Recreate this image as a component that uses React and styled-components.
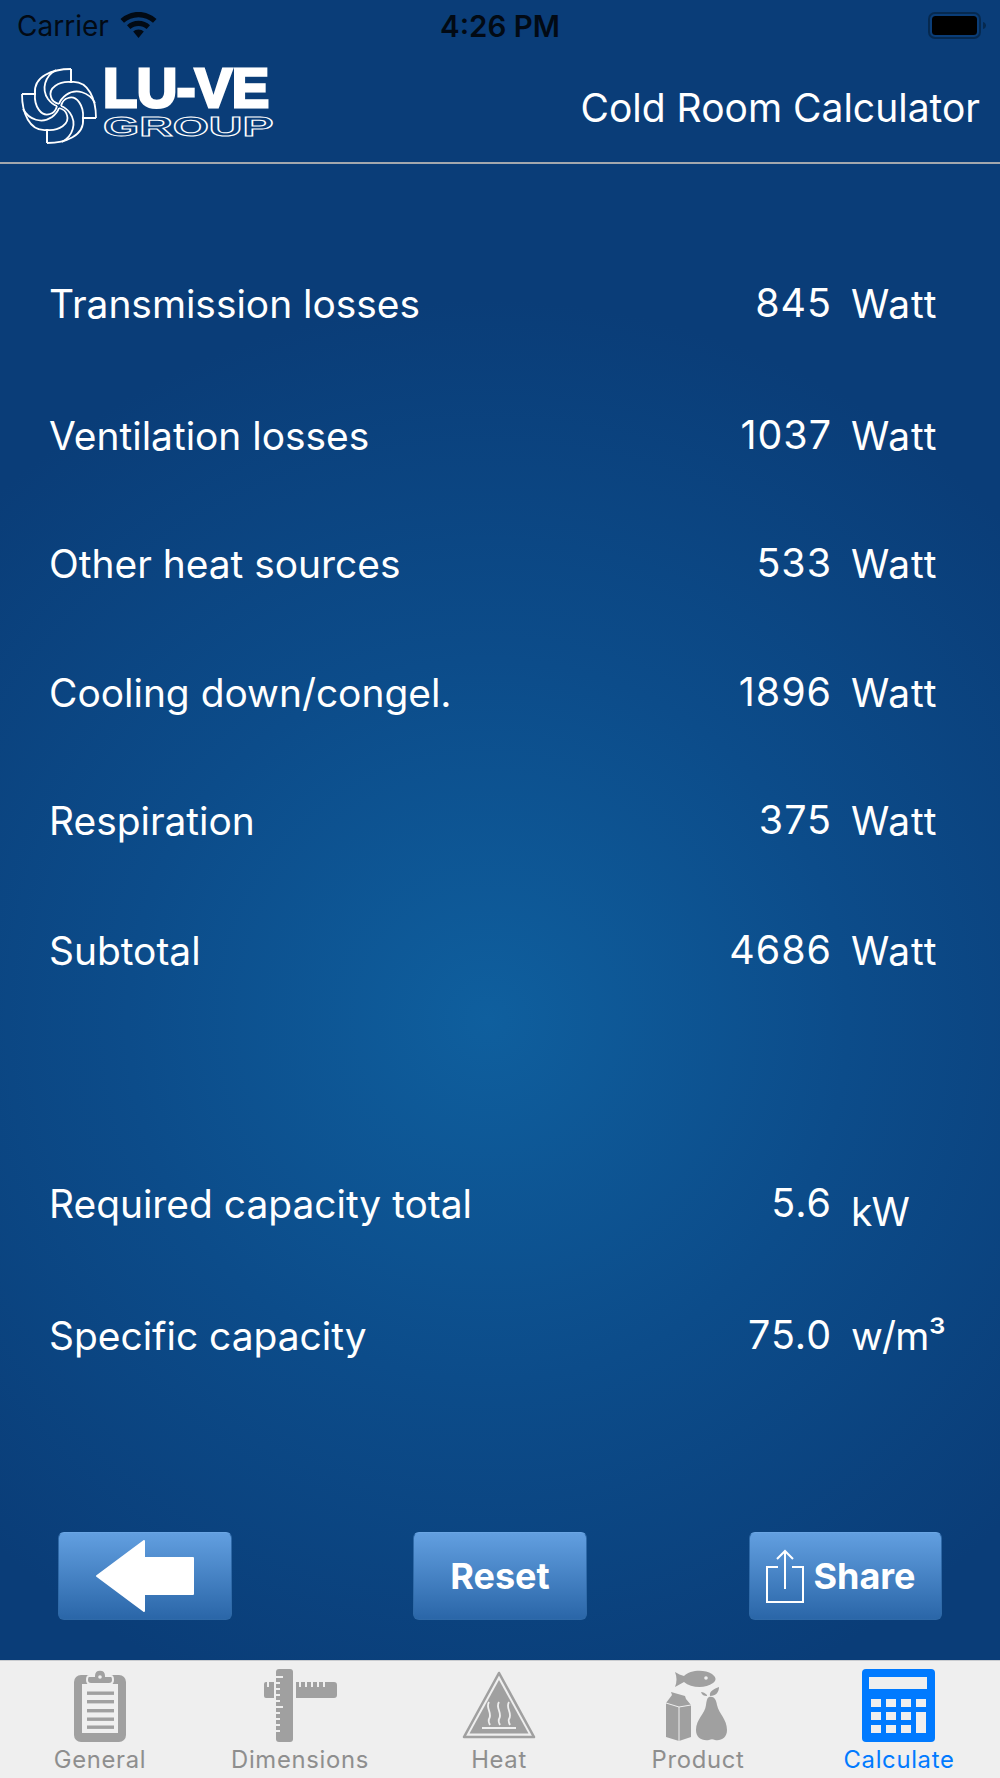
import styled, { createGlobalStyle } from "styled-components";

const GlobalStyle = createGlobalStyle`
    html, body {
        margin: 0;
        padding: 0;
    }
    * {
        box-sizing: border-box;
    }
`;

const Screen = styled.div`
    width: 1000px;
    height: 1778px;
    display: flex;
    flex-direction: column;
    overflow: hidden;
    font-family: Inter, "Liberation Sans", sans-serif;
    background: radial-gradient(circle 720px at 488px 1020px, #0f5f9e 0%, #0c4c8a 50%, #0a3d78 100%);
`;

const StatusBar = styled.div`
    height: 50px;
    position: relative;
    display: flex;
    align-items: center;
    justify-content: space-between;
    padding: 1px 12px 0 17px;
    color: #020a14;
    font-size: 28px;
`;

const Carrier = styled.div`
    display: flex;
    align-items: center;
    gap: 11px;
`;

const Clock = styled.div`
    position: absolute;
    left: 0;
    right: 0;
    text-align: center;
    font-size: 29.5px;
    font-weight: 600;
`;

const Header = styled.div`
    height: 114px;
    display: flex;
    align-items: center;
    justify-content: space-between;
    padding: 0 20px;
    border-bottom: 2px solid #a3a8ae;
`;

const Logo = styled.div`
    display: flex;
    align-items: flex-start;
    gap: 5px;
`;

const LogoWords = styled.div`
    display: flex;
    flex-direction: column;
    gap: 8px;
    font-family: "Liberation Sans", Arial, sans-serif;
    font-weight: 700;
    color: #fff;
`;

const LogoName = styled.div`
    font-size: 56px;
    line-height: 42px;
    height: 42px;
    letter-spacing: -0.5px;
    -webkit-text-stroke: 3px #fff;
`;

const LogoGroup = styled.div`
    font-size: 28px;
    line-height: 20px;
    height: 20px;
    color: transparent;
    -webkit-text-stroke: 1px #fff;
    transform: scaleX(1.66);
    transform-origin: left center;
`;

const Title = styled.div`
    color: #fff;
    font-size: 39px;
    margin-top: 2px;
`;

const Content = styled.div`
    flex: 1;
    display: flex;
    flex-direction: column;
    padding: 75px 0 40px;
`;

const Row = styled.div`
    display: grid;
    grid-template-columns: 1fr 130px 149px;
    column-gap: 20px;
    align-items: center;
    height: 128px;
    flex-shrink: 0;
    margin-top: ${(p) => p.$top || 0}px;
    padding-left: 49px;
    color: #fff;
    font-size: 38.9px;
`;

const Value = styled.div`
    text-align: right;
    font-size: 39.4px;
    letter-spacing: 1px;
    margin-right: -1px;
`;

const Unit = styled.div`
    position: relative;
    top: ${(p) => (p.$low ? 8 : 0)}px;
    letter-spacing: ${(p) => (p.$tight ? -0.8 : 0.9)}px;
`;

const Buttons = styled.div`
    display: flex;
    margin-top: auto;
    padding-left: 58px;
`;

const Button = styled.button`
    width: ${(p) => p.$w}px;
    height: 88px;
    margin-left: ${(p) => p.$left || 0}px;
    padding: 0 ${(p) => p.$right || 0}px 0 0;
    display: flex;
    align-items: center;
    justify-content: center;
    gap: 8px;
    border: 1px solid #2f6aa8;
    border-top-color: #6ba6e4;
    border-radius: 6px;
    background: linear-gradient(#629fe0, #2a66a8);
    color: #fff;
    font-family: Inter, "Liberation Sans", sans-serif;
    font-size: 36px;
    font-weight: 700;
`;

const TabBar = styled.div`
    height: 118px;
    display: grid;
    grid-template-columns: 200px 200px 198px 200px 202px;
    background: #efefef;
    border-top: 1px solid #c9ccd0;
`;

const Tab = styled.div`
    display: flex;
    flex-direction: column;
    align-items: center;
    padding-top: 8px;
    color: ${(p) => (p.$active ? "#007aff" : "#8e8e8e")};
    font-size: 23.8px;
    letter-spacing: 0.7px;
`;

const TabIcon = styled.svg`
    width: 80px;
    height: 74px;
    display: block;
`;

const TabLabel = styled.div`
    line-height: 28px;
    margin-top: 3px;
`;

const Blade = ({ angle }) => (
    <g transform={`rotate(${angle})`}>
        <path d="M12 -37 C-6 -37 -26 -30 -24 -12 L-37 -12" />
        <path d="M12 -37 L12 -24 C0 -25 -11 -18 -8 -9 C-7 -5 -4 -3 0 -2" />
        <path d="M-3 -36 C-14 -30 -18 -17 -11 -7 C-8 -3 -5 -1 -2 0" />
    </g>
);

const LogoMark = () => (
    <svg width="78" height="78" viewBox="-39 -39 78 78" fill="none" stroke="#fff" strokeWidth="1.8" strokeLinejoin="miter">
        {[0, 90, 180, 270].map((a) => (
            <Blade key={a} angle={a} />
        ))}
    </svg>
);

const WifiIcon = () => (
    <svg width="37" height="27" viewBox="0 0 37 27" fill="#020a14">
        <path d="M18.5 0 C25.5 0 31.8 2.7 36.5 7 L33 10.8 C29.2 7.3 24.1 5.2 18.5 5.2 C12.9 5.2 7.8 7.3 4 10.8 L0.5 7 C5.2 2.7 11.5 0 18.5 0 Z" />
        <path d="M18.5 8.8 C23 8.8 27 10.5 30 13.3 L26.6 17 C24.5 15 21.6 13.9 18.5 13.9 C15.4 13.9 12.5 15 10.4 17 L7 13.3 C10 10.5 14 8.8 18.5 8.8 Z" />
        <path d="M18.5 17.6 C20.6 17.6 22.4 18.4 23.8 19.6 L18.5 26 L13.2 19.6 C14.6 18.4 16.4 17.6 18.5 17.6 Z" />
    </svg>
);

const BatteryIcon = () => (
    <svg width="60" height="27" viewBox="0 0 60 27">
        <rect x="1" y="1" width="51" height="25" rx="6" fill="none" stroke="#06294f" strokeWidth="2" />
        <rect x="4" y="4" width="45" height="19" rx="3.5" fill="#000" />
        <path d="M55 10 C57 10.5 58 12 58 13.5 C58 15 57 16.5 55 17 Z" fill="#06294f" />
    </svg>
);

const BackArrow = () => (
    <svg width="98" height="72" viewBox="0 0 98 72" fill="#fff" stroke="#fff" strokeWidth="2" strokeLinejoin="round">
        <path d="M1 36 L48 1 L48 18 L97 18 L97 54 L48 54 L48 71 Z" />
    </svg>
);

const ShareIcon = () => (
    <svg width="40" height="54" viewBox="0 0 40 54" fill="none" stroke="#fff" strokeWidth="2">
        <path d="M13 18 L2 18 L2 53 L38 53 L38 18 L27 18" />
        <path d="M20 40 L20 2 M12 10 L20 2 L28 10" />
    </svg>
);

const GeneralIcon = () => (
    <TabIcon viewBox="0 0 80 74">
        <rect x="14" y="6" width="52" height="67" rx="7" fill="#a0a0a0" />
        <rect x="22" y="15" width="36" height="49" fill="#efefef" />
        <path d="M29 7 L34 7 C34 -1.5 46 -1.5 46 7 L51 7 C53 7 53 9 53 11 C53 14 51 15 49 15 L31 15 C29 15 27 14 27 11 C27 9 27 7 29 7 Z" fill="#a0a0a0" stroke="#efefef" strokeWidth="2" />
        <circle cx="40" cy="8" r="1.8" fill="#efefef" />
        {[22.5, 31, 40, 48.5, 56.5].map((y) => (
            <rect key={y} x="27" y={y} width="27" height="3.4" fill="#a0a0a0" />
        ))}
    </TabIcon>
);

const DimensionsIcon = () => (
    <TabIcon viewBox="0 0 80 74">
        <g transform="translate(1 1)">
            <path d="M3 14 Q3 12 5 12 L6 12 L6 17 L8 17 L8 12 L13 12 L13 28 L5 28 Q3 28 3 26 Z" fill="#a0a0a0" />
            <path d="M35 12 L38 12 L38 17 L40 17 L40 12 L44 12 L44 17 L46 17 L46 12 L50 12 L50 17 L52 17 L52 12 L56 12 L56 17 L58 17 L58 12 L62 12 L62 17 L64 17 L64 12 L73 12 Q76 12 76 15 L76 25 Q76 28 73 28 L35 28 Z" fill="#a0a0a0" />
        </g>
        <rect x="16" y="0" width="17" height="73" rx="3" fill="#a0a0a0" />
        {[7, 13, 19, 25, 31, 37, 43, 49, 55, 61].map((y, i) => (
            <rect key={y} x="16" y={y} width={i % 5 === 0 ? 7 : 4} height="2" fill="#efefef" />
        ))}
    </TabIcon>
);

const HeatIcon = () => (
    <TabIcon viewBox="0 0 80 74">
        <path d="M40 4 L75 68 L5 68 Z" fill="none" stroke="#a0a0a0" strokeWidth="2.6" strokeLinejoin="round" />
        <path d="M40 11 L69.5 64.5 L10.5 64.5 Z" fill="#a0a0a0" />
        <g fill="none" stroke="#efefef" strokeWidth="1.8">
            <path d="M30 33 C26 39 34 44 30 50 C29 52 30 54 31 56" />
            <path d="M40 33 C36 39 44 44 40 50 C39 52 40 54 41 56" />
            <path d="M50 33 C46 39 54 44 50 50 C49 52 50 54 51 56" />
        </g>
        <rect x="23" y="58" width="34" height="2" fill="#efefef" />
    </TabIcon>
);

const ProductIcon = () => (
    <TabIcon viewBox="0 0 80 74">
        <path d="M17 3 C20 5 23 6 26 7 C32 1 46 0 54 5 C58 8 59 11 55 14 C47 20 33 19 26 13 C23 15 20 16 17 18 C19 13 19 8 17 3 Z" fill="#a0a0a0" />
        <circle cx="48" cy="9" r="1.8" fill="#efefef" />
        <path d="M8 34 L14 26 L13 23 L27 27 L28 30 L33 36 L33 68 L21 72 L8 68 Z" fill="#a0a0a0" />
        <path d="M8 34 L21 38 L33 36 M21 38 L21 72" fill="none" stroke="#efefef" strokeWidth="1" />
        <path d="M51 28 C56 27 58 30 59 36 C61 45 69 50 69 61 C69 69 63 72 57 71 C55 70 53 70 51 71 C44 72 38 69 38 61 C38 50 47 45 48 36 C48.5 32 49 29 51 28 Z" fill="#a0a0a0" />
        <path d="M52 27 C51 22 56 20 61 18 C61 23 58 27 52 27 Z M49 26 C47 24 45 23 43 23 C44 26 46 27 49 27 Z" fill="#a0a0a0" />
    </TabIcon>
);

const CalculateIcon = () => (
    <TabIcon viewBox="0 0 80 74">
        <rect x="3" y="0" width="73" height="73" rx="4" fill="#007aff" />
        <rect x="10" y="8" width="58" height="12" fill="#efefef" />
        {[30, 43, 56].map((y) =>
            [12, 27, 42].map((x) => <rect key={`${x}-${y}`} x={x} y={y} width="10" height="8" fill="#efefef" />)
        )}
        <rect x="57" y="30" width="10" height="8" fill="#efefef" />
        <rect x="57" y="43" width="10" height="21" fill="#efefef" />
    </TabIcon>
);

const rows = [
    { label: "Transmission losses", value: "845", unit: "Watt" },
    { label: "Ventilation losses", value: "1037", unit: "Watt", top: 4 },
    { label: "Other heat sources", value: "533", unit: "Watt" },
    { label: "Cooling down/congel.", value: "1896", unit: "Watt", top: 1 },
    { label: "Respiration", value: "375", unit: "Watt" },
    { label: "Subtotal", value: "4686", unit: "Watt", top: 2 },
    { label: "Required capacity total", value: "5.6", unit: "kW", top: 125, low: true, tight: true },
    { label: "Specific capacity", value: "75.0", unit: "w/m³", top: 4, tight: true },
];

const tabs = [
    { label: "General", icon: <GeneralIcon /> },
    { label: "Dimensions", icon: <DimensionsIcon /> },
    { label: "Heat", icon: <HeatIcon /> },
    { label: "Product", icon: <ProductIcon /> },
    { label: "Calculate", icon: <CalculateIcon />, active: true },
];

const App = () => {
    return (
        <Screen>
            <GlobalStyle />
            <StatusBar>
                <Carrier>
                    Carrier
                    <WifiIcon />
                </Carrier>
                <Clock>4:26 PM</Clock>
                <BatteryIcon />
            </StatusBar>
            <Header>
                <Logo>
                    <LogoMark />
                    <LogoWords>
                        <LogoName>LU-VE</LogoName>
                        <LogoGroup>GROUP</LogoGroup>
                    </LogoWords>
                </Logo>
                <Title>Cold Room Calculator</Title>
            </Header>
            <Content>
                {rows.map((row) => (
                    <Row key={row.label} $top={row.top}>
                        <div>{row.label}</div>
                        <Value>{row.value}</Value>
                        <Unit $low={row.low} $tight={row.tight}>{row.unit}</Unit>
                    </Row>
                ))}
                <Buttons>
                    <Button $w={174}>
                        <BackArrow />
                    </Button>
                    <Button $w={174} $left={181}>Reset</Button>
                    <Button $w={193} $left={162} $right={10}>
                        <ShareIcon />
                        Share
                    </Button>
                </Buttons>
            </Content>
            <TabBar>
                {tabs.map((tab) => (
                    <Tab key={tab.label} $active={tab.active}>
                        {tab.icon}
                        <TabLabel>{tab.label}</TabLabel>
                    </Tab>
                ))}
            </TabBar>
        </Screen>
    );
};

export default App;
